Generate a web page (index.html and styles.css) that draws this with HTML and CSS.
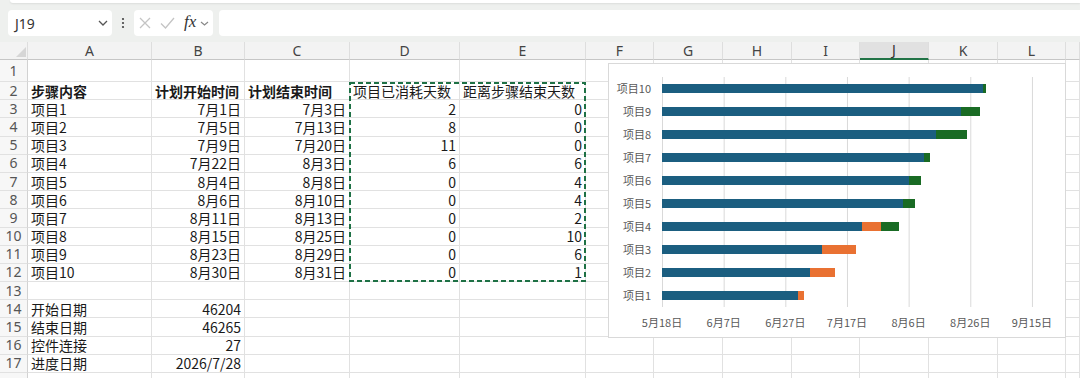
FILE: index.html
```html
<!DOCTYPE html>
<html lang="zh">
<head>
<meta charset="utf-8">
<title>Gantt</title>
<link rel="stylesheet" href="styles.css">
</head>
<body>
<div class="ribbon"></div>
<div class="fbar">
  <div class="namebox"><span>J19</span>
    <svg class="chev" width="10" height="6" viewBox="0 0 10 6"><path d="M1 1 L5 5 L9 1" fill="none" stroke="#555" stroke-width="1.3"/></svg>
  </div>
  <div class="dots"><svg width="4" height="12" viewBox="0 0 4 12"><circle cx="2" cy="2" r="1.1" fill="#444"/><circle cx="2" cy="6" r="1.1" fill="#444"/><circle cx="2" cy="10" r="1.1" fill="#444"/></svg></div>
  <div class="fxbox">
    <svg class="ic-x" width="12" height="12" viewBox="0 0 12 12"><path d="M1 1 L11 11 M11 1 L1 11" fill="none" stroke="#c4c4c4" stroke-width="1.3"/></svg>
    <svg class="ic-ok" width="15" height="12" viewBox="0 0 15 12"><path d="M1 6.5 L5.5 11 L14 1" fill="none" stroke="#c4c4c4" stroke-width="1.3"/></svg>
    <span class="fx">fx</span>
    <svg class="chev2" width="9" height="5" viewBox="0 0 9 5"><path d="M1 1 L4.5 4 L8 1" fill="none" stroke="#888" stroke-width="1.2"/></svg>
  </div>
  <div class="finput"></div>
</div>

<div class="sheet-wrap">
<div class="sheet">
  <div class="ch corner"></div><div class="ch">A</div><div class="ch">B</div><div class="ch">C</div><div class="ch">D</div><div class="ch">E</div><div class="ch">F</div><div class="ch">G</div><div class="ch">H</div><div class="ch">I</div><div class="ch sel">J</div><div class="ch">K</div><div class="ch">L</div><div class="ch"></div>

  <div class="rh">1</div><div></div><div></div><div></div><div></div><div></div><div></div><div></div><div></div><div></div><div></div><div></div><div></div><div></div>

  <div class="rh">2</div><div class="b">步骤内容</div><div class="b">计划开始时间</div><div class="b">计划结束时间</div><div>项目已消耗天数</div><div>距离步骤结束天数</div><div></div><div></div><div></div><div></div><div></div><div></div><div></div><div></div>

  <div class="rh">3</div><div>项目1</div><div class="n">7月1日</div><div class="n">7月3日</div><div class="n">2</div><div class="n">0</div><div></div><div></div><div></div><div></div><div></div><div></div><div></div><div></div>

  <div class="rh">4</div><div>项目2</div><div class="n">7月5日</div><div class="n">7月13日</div><div class="n">8</div><div class="n">0</div><div></div><div></div><div></div><div></div><div></div><div></div><div></div><div></div>

  <div class="rh">5</div><div>项目3</div><div class="n">7月9日</div><div class="n">7月20日</div><div class="n">11</div><div class="n">0</div><div></div><div></div><div></div><div></div><div></div><div></div><div></div><div></div>

  <div class="rh">6</div><div>项目4</div><div class="n">7月22日</div><div class="n">8月3日</div><div class="n">6</div><div class="n">6</div><div></div><div></div><div></div><div></div><div></div><div></div><div></div><div></div>

  <div class="rh">7</div><div>项目5</div><div class="n">8月4日</div><div class="n">8月8日</div><div class="n">0</div><div class="n">4</div><div></div><div></div><div></div><div></div><div></div><div></div><div></div><div></div>

  <div class="rh">8</div><div>项目6</div><div class="n">8月6日</div><div class="n">8月10日</div><div class="n">0</div><div class="n">4</div><div></div><div></div><div></div><div></div><div></div><div></div><div></div><div></div>

  <div class="rh">9</div><div>项目7</div><div class="n">8月11日</div><div class="n">8月13日</div><div class="n">0</div><div class="n">2</div><div></div><div></div><div></div><div></div><div></div><div></div><div></div><div></div>

  <div class="rh">10</div><div>项目8</div><div class="n">8月15日</div><div class="n">8月25日</div><div class="n">0</div><div class="n">10</div><div></div><div></div><div></div><div></div><div></div><div></div><div></div><div></div>

  <div class="rh">11</div><div>项目9</div><div class="n">8月23日</div><div class="n">8月29日</div><div class="n">0</div><div class="n">6</div><div></div><div></div><div></div><div></div><div></div><div></div><div></div><div></div>

  <div class="rh">12</div><div>项目10</div><div class="n">8月30日</div><div class="n">8月31日</div><div class="n">0</div><div class="n">1</div><div></div><div></div><div></div><div></div><div></div><div></div><div></div><div></div>

  <div class="rh">13</div><div></div><div></div><div></div><div></div><div></div><div></div><div></div><div></div><div></div><div></div><div></div><div></div><div></div>

  <div class="rh">14</div><div>开始日期</div><div class="n">46204</div><div></div><div></div><div></div><div></div><div></div><div></div><div></div><div></div><div></div><div></div><div></div>

  <div class="rh">15</div><div>结束日期</div><div class="n">46265</div><div></div><div></div><div></div><div></div><div></div><div></div><div></div><div></div><div></div><div></div><div></div>

  <div class="rh">16</div><div>控件连接</div><div class="n">27</div><div></div><div></div><div></div><div></div><div></div><div></div><div></div><div></div><div></div><div></div><div></div>

  <div class="rh">17</div><div>进度日期</div><div class="n">2026/7/28</div><div></div><div></div><div></div><div></div><div></div><div></div><div></div><div></div><div></div><div></div><div></div>

  <div class="rh"></div><div></div><div></div><div></div><div></div><div></div><div></div><div></div><div></div><div></div><div></div><div></div><div></div><div></div>
</div>

<svg class="marquee" width="238" height="201" viewBox="0 0 238 201"><rect x="1" y="1" width="235" height="198" fill="none" stroke="#1e7145" stroke-width="2" stroke-dasharray="5 3"/></svg>

<div class="chart">
  <div class="plotwrap">
    <div class="cats">
      <span>项目10</span><span>项目9</span><span>项目8</span><span>项目7</span><span>项目6</span><span>项目5</span><span>项目4</span><span>项目3</span><span>项目2</span><span>项目1</span>
    </div>
    <div class="plot">
      <div class="bar"><i class="s1" style="width:320.67px"></i><i class="s3" style="width:3.08px"></i></div>
      <div class="bar"><i class="s1" style="width:299.08px"></i><i class="s3" style="width:18.5px"></i></div>
      <div class="bar"><i class="s1" style="width:274.42px"></i><i class="s3" style="width:30.83px"></i></div>
      <div class="bar"><i class="s1" style="width:262.08px"></i><i class="s3" style="width:6.17px"></i></div>
      <div class="bar"><i class="s1" style="width:246.67px"></i><i class="s3" style="width:12.33px"></i></div>
      <div class="bar"><i class="s1" style="width:240.5px"></i><i class="s3" style="width:12.33px"></i></div>
      <div class="bar"><i class="s1" style="width:200.42px"></i><i class="s2" style="width:18.5px"></i><i class="s3" style="width:18.5px"></i></div>
      <div class="bar"><i class="s1" style="width:160.33px"></i><i class="s2" style="width:33.92px"></i></div>
      <div class="bar"><i class="s1" style="width:148px"></i><i class="s2" style="width:24.67px"></i></div>
      <div class="bar"><i class="s1" style="width:135.67px"></i><i class="s2" style="width:6.17px"></i></div>
    </div>
  </div>
  <div class="axis">
    <span>5月18日</span><span>6月7日</span><span>6月27日</span><span>7月17日</span><span>8月6日</span><span>8月26日</span><span>9月15日</span>
  </div>
</div>
</div>
</body>
</html>
```

FILE: styles.css
```css
* { box-sizing: border-box; margin: 0; padding: 0; }

html, body {
  width: 1080px;
  height: 378px;
  overflow: hidden;
}

body {
  background: #eef0ee;
  font-family: "Noto Sans CJK SC", "Noto Sans", sans-serif;
  color: #1a1a1a;
}

.ribbon {
  height: 3px;
  margin-left: 10px;
  background: #fff;
  border-radius: 0 0 0 6px;
  box-shadow: 0 1px 2px rgba(0, 0, 0, 0.08);
}

.fbar {
  display: flex;
  align-items: center;
  height: 26px;
  margin-top: 7px;
  padding-left: 8px;
}

.namebox {
  width: 104px;
  height: 26px;
  background: #fff;
  border-radius: 4px;
  display: flex;
  align-items: center;
  justify-content: space-between;
  padding: 0 4px 0 7px;
  font-family: "Noto Sans", sans-serif;
  font-size: 14px;
  color: #333;
}

.dots {
  width: 22px;
  display: flex;
  justify-content: center;
  align-items: center;
}

.fxbox {
  width: 79px;
  height: 26px;
  background: #fff;
  border-radius: 4px;
  display: flex;
  align-items: center;
  padding-left: 5px;
}

.ic-x { margin-right: 9px; }
.ic-ok { margin-right: 9px; }

.fx {
  font-family: "Liberation Serif", serif;
  font-style: italic;
  font-size: 17px;
  color: #333;
  line-height: 20px;
  margin-right: 4px;
  margin-top: -2px;
}

.finput {
  flex: 1;
  height: 26px;
  margin-left: 6px;
  background: #fff;
  border-radius: 4px 0 0 4px;
}

.sheet-wrap {
  position: relative;
  margin-top: 6px;
}

.sheet {
  display: grid;
  grid-template-columns: 28px 124px 93px 105px 110px 126px 68px 69px 69px 68px 69px 69px 68px 14px;
  grid-template-rows: 18px 22px repeat(16, 18.2px) 20px;
  background: #fff;
  width: 1080px;
}

.sheet > div {
  border-right: 1px solid #e1e1e1;
  border-bottom: 1px solid #e1e1e1;
  font-size: 14px;
  line-height: 18px;
  padding: 0 3px;
  white-space: nowrap;
  display: flex;
  align-items: center;
}

.sheet > .n { justify-content: flex-end; }
.sheet > .b { font-weight: 700; }

.sheet > .ch {
  background: #f3f3f3;
  border-right: 1px solid #dedede;
  border-bottom: 1px solid #c6c6c6;
  justify-content: center;
  font-family: "Noto Sans", sans-serif;
  font-size: 14px;
  color: #444;
}

.sheet > .ch.sel {
  background: #e1e1e1;
  border-bottom: 2px solid #217346;
  color: #333;
}

.sheet > .corner {
  position: relative;
}

.corner::after {
  content: "";
  position: absolute;
  right: 1px;
  bottom: 2px;
  width: 0;
  height: 0;
  border-left: 10px solid transparent;
  border-bottom: 10px solid #d6d6d6;
}

.sheet > .rh {
  background: #f7f7f7;
  border-right: 1px solid #d2d2d2;
  justify-content: center;
  font-family: "Noto Sans", sans-serif;
  font-size: 14px;
  color: #555;
  padding: 0;
}

.marquee {
  position: absolute;
  left: 349px;
  top: 40px;
}

.chart {
  position: absolute;
  left: 608px;
  top: 21px;
  width: 458px;
  height: 275px;
  background: #fff;
  border: 1px solid #d9d9d9;
  padding-top: 13px;
  font-family: "Noto Sans CJK SC", sans-serif;
  color: #595959;
}

.plotwrap {
  display: flex;
}

.cats {
  width: 53px;
  padding-right: 11px;
  display: flex;
  flex-direction: column;
}

.cats span {
  height: 23px;
  line-height: 23px;
  font-size: 11px;
  text-align: right;
  white-space: nowrap;
}

.plot {
  width: 371px;
  height: 230px;
  background-image: linear-gradient(to right, #d9d9d9 1px, transparent 1px);
  background-size: 61.667px 100%;
  display: flex;
  flex-direction: column;
}

.bar {
  height: 23px;
  display: flex;
  align-items: center;
}

.bar i {
  display: block;
  height: 9px;
}

.bar .s1 { background: #1b5e80; }
.bar .s2 { background: #e97132; }
.bar .s3 { background: #196b24; }

.axis {
  display: flex;
  margin-left: 22.17px;
  margin-top: 8px;
}

.axis span {
  width: 61.667px;
  flex: none;
  text-align: center;
  font-size: 11px;
  line-height: 14px;
  white-space: nowrap;
}
```
